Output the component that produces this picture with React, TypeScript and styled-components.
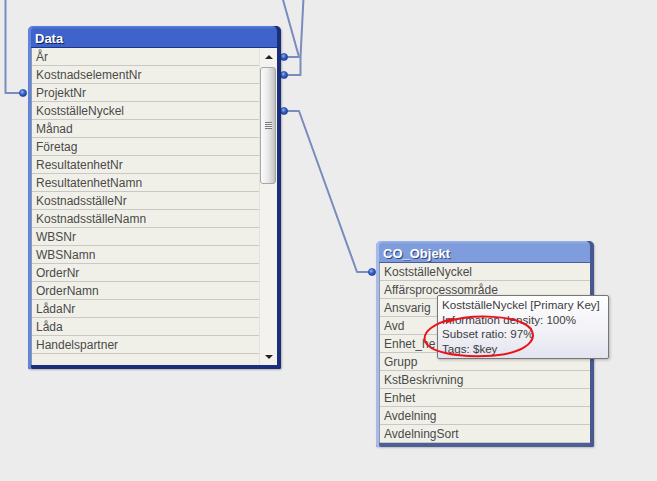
import React from "react";
import styled, { createGlobalStyle } from "styled-components";

const Global = createGlobalStyle`
  html, body { margin: 0; padding: 0; background: #ececec; }
  body { font-family: "Liberation Sans", Arial, sans-serif; }
`;

const Canvas = styled.div`
  position: relative;
  width: 657px;
  height: 481px;
  overflow: hidden;
  background: #ececec;
`;

const Overlay = styled.svg`
  position: absolute;
  left: 0;
  top: 0;
  width: 657px;
  height: 481px;
  pointer-events: none;
`;

const Window = styled.div<{ $x: number; $y: number; $w: number; $active: boolean }>`
  position: absolute;
  left: ${(p) => p.$x}px;
  top: ${(p) => p.$y}px;
  width: ${(p) => p.$w}px;
  display: flex;
  flex-direction: column;
  border-radius: 5px 5px 2px 2px;
  background: ${(p) =>
    p.$active
      ? "linear-gradient(#5b80de 0px, #3e64cb 3px, #3a5fc7 100%)"
      : "linear-gradient(#9ab3ea 0px, #7f9ddc 3px, #7c9adb 100%)"};
  box-shadow: ${(p) =>
    p.$active
      ? "inset 3px 0 0 #5f84da, inset -4px 0 0 #1b2e7c, inset 0 -4px 0 #1b2e7c, 1px 1px 2px rgba(0,0,0,0.25)"
      : "inset 3px 0 0 #a6bbea, inset -4px 0 0 #46588f, inset 0 -4px 0 #4d5f96, 1px 1px 2px rgba(0,0,0,0.2)"};
`;

const TitleBar = styled.div<{ $active: boolean }>`
  height: 17px;
  padding: 4px 0 0 7px;
  font: bold 13px/17px "Liberation Sans", Arial, sans-serif;
  color: #ffffff;
  text-shadow: 1px 1px 0 ${(p) => (p.$active ? "#0c1c58" : "#34467e")};
  white-space: nowrap;
`;

const Body = styled.div<{ $active: boolean }>`
  display: flex;
  margin: 0 4px 4px 3px;
  border-top: 1px solid ${(p) => (p.$active ? "#1d3488" : "#4a5d98")};
`;

const Rows = styled.div<{ $h: number }>`
  flex: 1;
  height: ${(p) => p.$h}px;
  overflow: hidden;
  border-left: 1px solid #9097a8;
  background: #f1f0e8;
`;

const Row = styled.div`
  padding: 2px 0 0 4px;
  height: 15px;
  line-height: 15px;
  border-bottom: 1px solid #c8c8c4;
  font-size: 12px;
  color: #4a4a4a;
  white-space: nowrap;
  overflow: hidden;
`;

const ScrollBar = styled.div`
  width: 17px;
  display: flex;
  flex-direction: column;
  background: #f3f2ee;
  border-left: 1px solid #e4e3de;
`;

const ArrowButton = styled.div<{ $down?: boolean }>`
  height: 17px;
  display: flex;
  align-items: center;
  justify-content: center;
  &::after {
    content: "";
    width: 0;
    height: 0;
    border-left: 4px solid transparent;
    border-right: 4px solid transparent;
    ${(p) =>
      p.$down
        ? "border-top: 4px solid #222;"
        : "border-bottom: 4px solid #222;"}
  }
`;

const Track = styled.div`
  flex: 1;
  padding: 2px 0 0 0;
`;

const Thumb = styled.div`
  margin: 0 1px 0 0;
  height: 115px;
  border: 1px solid #a6a6a6;
  border-radius: 3px;
  background: linear-gradient(90deg, #fbfbfb 0%, #ececec 45%, #cfcfcf 85%, #bdbdbd 100%);
  display: flex;
  align-items: center;
  justify-content: center;
`;

const Grip = styled.div`
  width: 7px;
  height: 7px;
  background: repeating-linear-gradient(#7a7a7a 0 1px, #f4f4f4 1px 2px);
`;

const Tooltip = styled.div`
  position: absolute;
  left: 437px;
  top: 295px;
  width: 172px;
  height: 64px;
  box-sizing: border-box;
  padding: 2px 0 0 4px;
  border: 1px solid #767676;
  border-radius: 2px;
  background: linear-gradient(#ffffff 0%, #f3f3f8 50%, #e3e4ef 100%);
  box-shadow: 1px 1px 3px rgba(0, 0, 0, 0.25);
  font: 11.6px/14.7px "Liberation Sans", Arial, sans-serif;
  color: #3c3c3c;
  white-space: nowrap;
`;

const TipLine = styled.div``;

const dataFields = [
  "År",
  "KostnadselementNr",
  "ProjektNr",
  "KostställeNyckel",
  "Månad",
  "Företag",
  "ResultatenhetNr",
  "ResultatenhetNamn",
  "KostnadsställeNr",
  "KostnadsställeNamn",
  "WBSNr",
  "WBSNamn",
  "OrderNr",
  "OrderNamn",
  "LådaNr",
  "Låda",
  "Handelspartner",
  "",
];

const coFields = [
  "KostställeNyckel",
  "Affärsprocessområde",
  "Ansvarig",
  "Avd",
  "Enhet_he",
  "Grupp",
  "KstBeskrivning",
  "Enhet",
  "Avdelning",
  "AvdelningSort",
];

const linkColor = "#7a8bbd";

const Dot: React.FC<{ x: number; y: number }> = ({ x, y }) => (
  <circle cx={x} cy={y} r={3.6} fill="url(#dotGrad)" stroke="#1f3d96" strokeWidth={0.6} />
);

export default function App() {
  return (
    <>
      <Global />
      <Canvas>
        <Overlay viewBox="0 0 657 481">
          <defs>
            <radialGradient id="dotGrad" cx="0.38" cy="0.35" r="0.7">
              <stop offset="0" stopColor="#9fbaf2" />
              <stop offset="0.45" stopColor="#3c66d0" />
              <stop offset="1" stopColor="#1b3a98" />
            </radialGradient>
          </defs>
          <g fill="none" stroke={linkColor} strokeWidth={2} strokeLinejoin="round">
            <path d="M23 93 H5.5 V-2" />
            <path d="M284 57 H299 L282.5 -2" />
            <path d="M284 75 H300.5 V57 L303.5 -2" />
            <path d="M284 111 H299 L357 272 H372" />
          </g>
          <Dot x={23} y={93} />
          <Dot x={284} y={57} />
          <Dot x={284} y={75} />
          <Dot x={284} y={111} />
          <Dot x={372} y={272} />
        </Overlay>

        <Window $x={28} $y={26} $w={253} $active>
          <TitleBar $active>Data</TitleBar>
          <Body $active>
            <Rows $h={317}>
              {dataFields.map((f, i) => (
                <Row key={i}>{f}</Row>
              ))}
            </Rows>
            <ScrollBar>
              <ArrowButton />
              <Track>
                <Thumb>
                  <Grip />
                </Thumb>
              </Track>
              <ArrowButton $down />
            </ScrollBar>
          </Body>
        </Window>

        <Window $x={376} $y={241} $w={218} $active={false}>
          <TitleBar $active={false}>CO_Objekt</TitleBar>
          <Body $active={false}>
            <Rows $h={180}>
              {coFields.map((f, i) => (
                <Row key={i}>{f}</Row>
              ))}
            </Rows>
          </Body>
        </Window>

        <Tooltip>
          <TipLine>KostställeNyckel [Primary Key]</TipLine>
          <TipLine>Information density: 100%</TipLine>
          <TipLine>Subset ratio: 97%</TipLine>
          <TipLine>Tags: $key</TipLine>
        </Tooltip>

        <Overlay viewBox="0 0 657 481">
          <path
            d="M447 322 C470 314, 518 314, 531 329 C539 343, 520 355, 485 356 C455 357, 429 352, 425 341 C422 331, 436 323, 452 319"
            fill="none"
            stroke="#e8141a"
            strokeWidth={2}
            strokeLinecap="round"
          />
        </Overlay>
      </Canvas>
    </>
  );
}
